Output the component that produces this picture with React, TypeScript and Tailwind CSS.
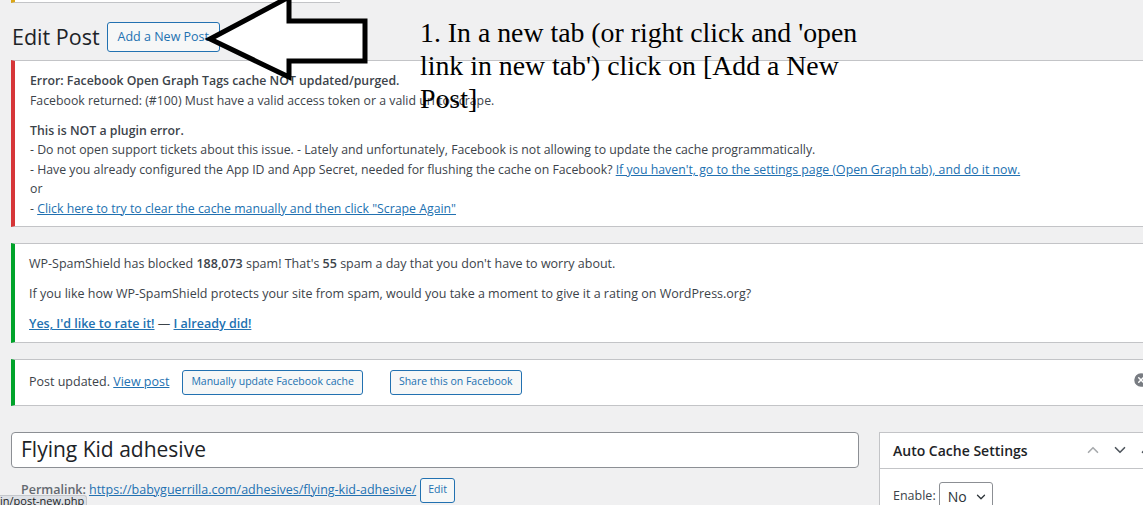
import { ChevronUp, ChevronDown, CircleX } from "lucide-react";

const linkCls = "text-[#2271b1] underline";
const btnSmall =
  "inline-flex items-center h-[25px] px-[8px] rounded-[3px] border border-[#2271b1] bg-[#f6f7f7] text-[#2271b1] text-[10.5px]";

const App = () => {
  return (
    <div
      className="relative w-[1143px] h-[505px] overflow-hidden bg-[#f0f0f1] text-[#3c434a]"
      style={{ fontFamily: '"Open Sans", "Noto Sans", sans-serif' }}
    >
      {/* cut off notice at the very top */}
      <div className="ml-[11px] w-[329px] h-[3px] bg-white border-l-4 border-l-[#dba617] border-b border-b-[#c3c4c7]" />

      {/* Page title */}
      <div className="ml-[12px] mt-[19px] flex items-center gap-[7px] h-[30px]">
        <h1 className="text-[21.5px] leading-[30px] text-[#1d2327] font-normal">Edit Post</h1>
        <button className="h-[30px] px-[10px] rounded-[3px] border border-[#2271b1] bg-[#f6f7f7] text-[#2271b1] text-[12.5px]">
          Add a New Post
        </button>
      </div>

      {/* Error notice */}
      <div className="ml-[11px] -mr-[10px] mt-[8px] bg-white border border-[#c3c4c7] border-l-4 border-l-[#d63638] pl-[15px] pt-[10px] pb-[8px] text-[12.3px] leading-[19.5px]">
        <p className="font-semibold">Error: Facebook Open Graph Tags cache NOT updated/purged.</p>
        <p>Facebook returned: (#100) Must have a valid access token or a valid url to scrape.</p>
        <p className="mt-[10.5px] font-semibold">This is NOT a plugin error.</p>
        <p>
          - Do not open support tickets about this issue. - Lately and unfortunately, Facebook is not allowing to
          update the cache programmatically.
        </p>
        <p>
          - Have you already configured the App ID and App Secret, needed for flushing the cache on Facebook?{" "}
          <a className={linkCls}>If you haven't, go to the settings page (Open Graph tab), and do it now.</a>
        </p>
        <p>or</p>
        <p>
          - <a className={linkCls}>Click here to try to clear the cache manually and then click "Scrape Again"</a>
        </p>
      </div>

      {/* SpamShield notice */}
      <div className="ml-[11px] -mr-[10px] mt-[16px] bg-white border border-[#c3c4c7] border-l-4 border-l-[#00a32a] pl-[14px] pt-[10px] pb-[8px] text-[12.5px] leading-[19.5px]">
        <p>
          WP-SpamShield has blocked <strong className="font-semibold">188,073</strong> spam! That's{" "}
          <strong className="font-semibold">55</strong> spam a day that you don't have to worry about.
        </p>
        <p className="mt-[10.5px]">
          If you like how WP-SpamShield protects your site from spam, would you take a moment to give it a rating on
          WordPress.org?
        </p>
        <p className="mt-[10.5px]">
          <a className={`${linkCls} font-semibold`}>Yes, I'd like to rate it!</a> —{" "}
          <a className={`${linkCls} font-semibold`}>I already did!</a>
        </p>
      </div>

      {/* Post updated notice */}
      <div className="relative ml-[11px] -mr-[10px] mt-[16px] h-[47px] bg-white border border-[#c3c4c7] border-l-4 border-l-[#00a32a] pl-[14px] flex items-center text-[12.5px]">
        <span>
          Post updated. <a className={linkCls}>View post</a>
        </span>
        <button className={`${btnSmall} ml-[13px]`}>Manually update Facebook cache</button>
        <button className={`${btnSmall} ml-[27px]`}>Share this on Facebook</button>
        <CircleX className="absolute left-[1117px] top-[11px] w-[18px] h-[18px] text-white fill-[#787c82]" />
      </div>

      {/* Editor row */}
      <div className="ml-[11px] mt-[26px] flex gap-[20px]">
        <div className="w-[848px] shrink-0">
          <div className="h-[36px] bg-white border border-[#8c8f94] rounded-[4px] flex items-center pl-[9px] text-[21px] text-[#1d2327]">
            Flying Kid adhesive
          </div>
          <div className="mt-[10px] pl-[10px] h-[25px] flex items-center text-[12.5px] text-[#646970]">
            <span className="font-semibold">Permalink:</span>
            <a className={`${linkCls} ml-[3px]`}>https://babyguerrilla.com/adhesives/flying-kid-adhesive/</a>
            <button className={`${btnSmall} ml-[4px] !px-[7px]`}>Edit</button>
          </div>
        </div>
        <div className="w-[290px] shrink-0 bg-white border border-[#c3c4c7]">
          <div className="h-[36px] border-b border-[#c3c4c7] flex items-center pl-[13px] pr-[12px]">
            <span className="text-[14px] font-semibold text-[#1d2327]">Auto Cache Settings</span>
            <div className="ml-auto flex items-center gap-[9px]">
              <ChevronUp className="w-[18px] h-[18px] text-[#a7aaad]" strokeWidth={2.2} />
              <ChevronDown className="w-[18px] h-[18px] text-[#50575e]" strokeWidth={2.2} />
              <ChevronUp className="w-[18px] h-[18px] text-[#50575e]" strokeWidth={2.2} />
            </div>
          </div>
          <div className="pl-[13px] pt-[13px] flex items-center gap-[3px] text-[12.5px] text-[#3c434a]">
            <span>Enable:</span>
            <div className="h-[30px] w-[54px] border border-[#8c8f94] rounded-[3px] flex items-center pl-[8px] gap-[7px] text-[14px] text-[#2c3338]">
              No
              <ChevronDown className="w-[14px] h-[14px]" strokeWidth={2.2} />
            </div>
          </div>
        </div>
      </div>

      {/* Annotation arrow */}
      <svg className="absolute left-0 top-0" width="380" height="90" viewBox="0 0 380 90">
        <polygon
          points="210,39 289,-3 289,21 365,21 365,61 289,61 289,77"
          fill="white"
          stroke="black"
          strokeWidth="5"
          strokeLinejoin="miter"
        />
      </svg>

      {/* Annotation text */}
      <div
        className="absolute left-[420px] top-[16px] text-[27.8px] leading-[33px] text-black"
        style={{ fontFamily: '"Liberation Serif", "Times New Roman", serif' }}
      >
        1. In a new tab (or right click and 'open
        <br />
        link in new tab') click on [Add a New
        <br />
        Post]
      </div>

      {/* Browser status bubble */}
      <div className="absolute left-0 bottom-0 h-[10px] w-[87px] bg-[#dee1e6] border-t border-r border-[#c4c7cc] rounded-tr-[3px] overflow-hidden">
        <span className="absolute left-0 -top-[3px] text-[11px] leading-[16px] text-[#202124] whitespace-nowrap">
          in/post-new.php
        </span>
      </div>
    </div>
  );
};

export default App;
